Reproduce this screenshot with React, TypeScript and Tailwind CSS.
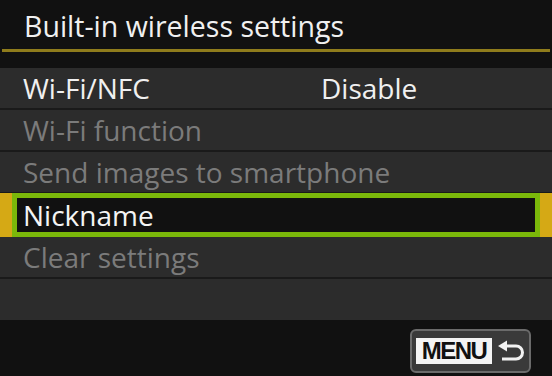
const FONT = { fontFamily: '"Open Sans", "Noto Sans", sans-serif' };

type Row = { label: string; value?: string; dim?: boolean };

const rows: Row[] = [
  { label: "Wi-Fi/NFC", value: "Disable" },
  { label: "Wi-Fi function", dim: true },
  { label: "Send images to smartphone", dim: true },
];

function BackArrow() {
  return (
    <svg width="28" height="22" viewBox="0 0 28 22" fill="none">
      <polygon points="1,6 10,0.5 10,11.5" fill="#f2f2f2" />
      <path d="M9 6 H19 A6.5 6.5 0 0 1 19 19 H5" stroke="#f2f2f2" strokeWidth="3" />
    </svg>
  );
}

export default function App() {
  return (
    <div className="flex h-[376px] w-[552px] flex-col bg-[#111111] text-[28px] leading-none" style={FONT}>
      {/* title */}
      <div className="flex h-[68px] flex-col bg-[#111111]">
        <div className="flex h-[49px] items-center whitespace-nowrap pl-[24px] pt-[3px] text-[28.5px] text-[#f0f0f0]">
          Built-in wireless settings
        </div>
        <div className="mx-[2px] h-[3px] bg-[#8f7c1c]" />
      </div>

      {/* menu rows */}
      {rows.map((r) => (
        <div key={r.label} className="flex h-[42px] flex-col bg-[#1a1a1a]">
          <div className="flex h-[40px] items-center whitespace-nowrap bg-[#2c2c2c] pl-[23px]">
            <span className={r.value ? "w-[298px] shrink-0 text-[#f0f0f0]" : "text-[#7b7b7b]"}>{r.label}</span>
            {r.value && <span className="text-[#f0f0f0]">{r.value}</span>}
          </div>
        </div>
      ))}

      <div className="-mt-[1px] flex h-[44px] bg-[#d5a915] px-[12px]">
        <div className="flex flex-1 items-center border-[5px] border-[#7bb80a] bg-[#111111] pb-[1px] pl-[6px] text-[#f4f4f4]">
          Nickname
        </div>
      </div>

      <div className="flex h-[42px] flex-col bg-[#1a1a1a]">
        <div className="flex h-[40px] items-center bg-[#2c2c2c] pl-[23px] text-[#7b7b7b]">Clear settings</div>
      </div>
      <div className="h-[41px] bg-[#2c2c2c]" />

      {/* bottom bar */}
      <div className="flex flex-1 items-start justify-end pr-[21px] pt-[9px]">
        <div className="flex h-[44px] w-[121px] items-center gap-[5px] rounded-[6px] border-2 border-[#6b6b6b] bg-[#3a3a3a] pl-[4px]">
          <div
            className="flex h-[26px] w-[76px] items-center justify-center bg-[#f4f4f4] text-[24px] font-bold tracking-[-1.5px] text-[#111]"
            style={{ fontFamily: '"Liberation Sans", Arial, sans-serif' }}
          >
            MENU
          </div>
          <BackArrow />
        </div>
      </div>
    </div>
  );
}
